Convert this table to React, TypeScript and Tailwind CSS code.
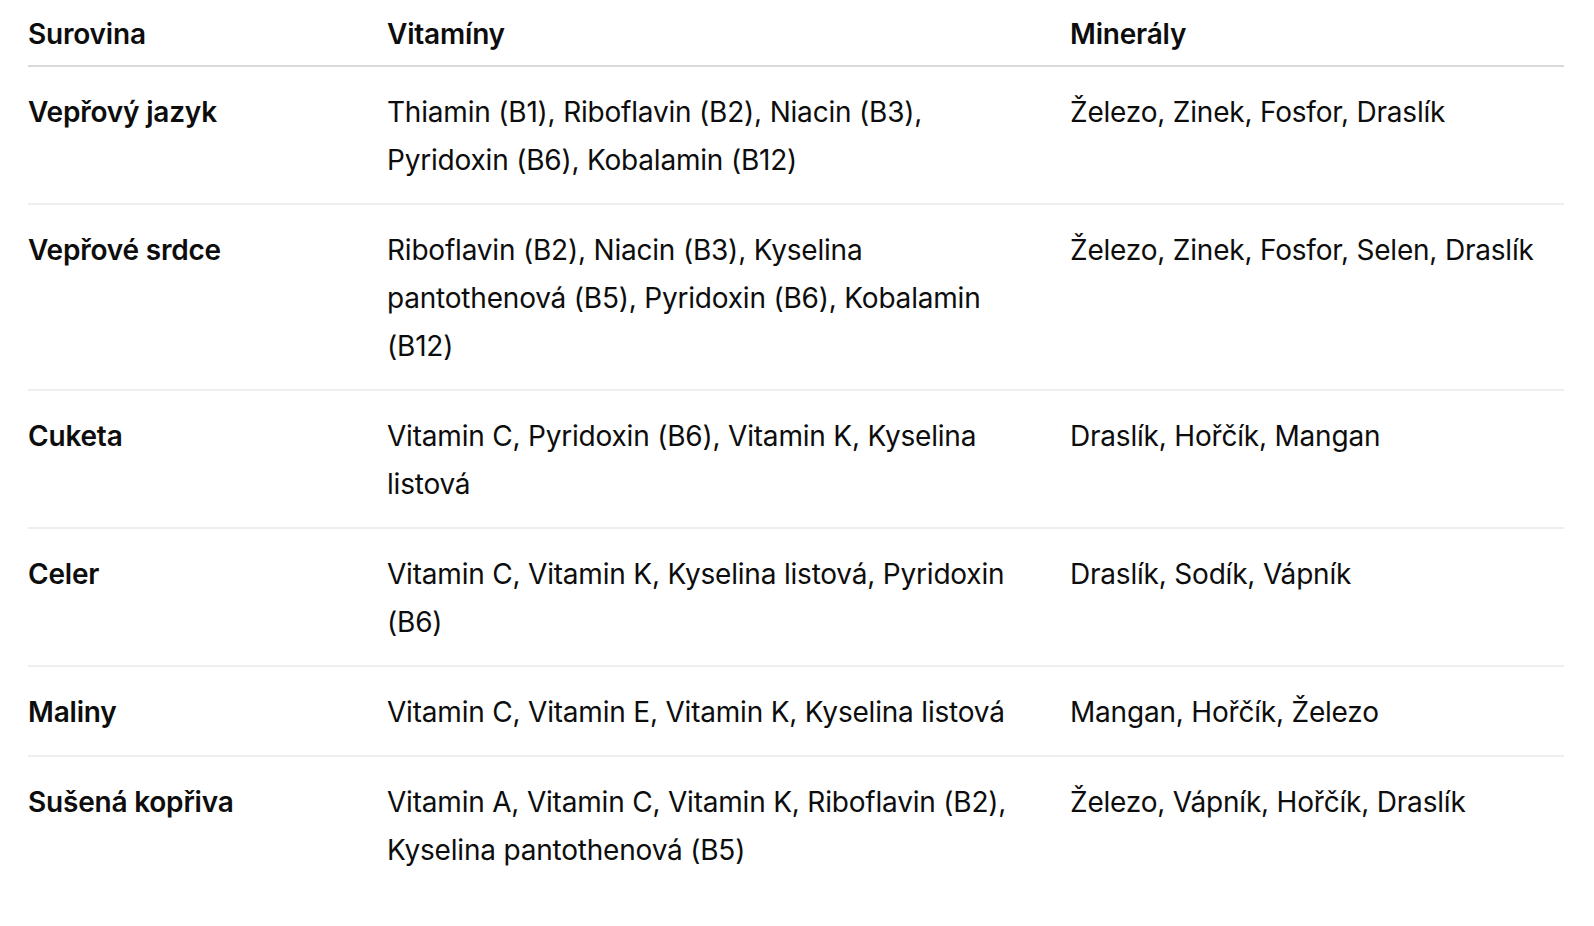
const rows: [string, string, string][] = [
  [
    "Vepřový jazyk",
    "Thiamin (B1), Riboflavin (B2), Niacin (B3), Pyridoxin (B6), Kobalamin (B12)",
    "Železo, Zinek, Fosfor, Draslík",
  ],
  [
    "Vepřové srdce",
    "Riboflavin (B2), Niacin (B3), Kyselina pantothenová (B5), Pyridoxin (B6), Kobalamin (B12)",
    "Železo, Zinek, Fosfor, Selen, Draslík",
  ],
  ["Cuketa", "Vitamin C, Pyridoxin (B6), Vitamin K, Kyselina listová", "Draslík, Hořčík, Mangan"],
  ["Celer", "Vitamin C, Vitamin K, Kyselina listová, Pyridoxin (B6)", "Draslík, Sodík, Vápník"],
  ["Maliny", "Vitamin C, Vitamin E, Vitamin K, Kyselina listová", "Mangan, Hořčík, Železo"],
  [
    "Sušená kopřiva",
    "Vitamin A, Vitamin C, Vitamin K, Riboflavin (B2), Kyselina pantothenová (B5)",
    "Železo, Vápník, Hořčík, Draslík",
  ],
];

export default function App() {
  return (
    <div className="min-h-screen bg-white pl-[28px] pr-[30px] pt-[10px] font-['Inter',sans-serif] text-[28px] leading-[48px] tracking-[-0.2px] text-[#0d0d0d]">
      {/* header */}
      <div className="grid grid-cols-[359px_683px_1fr] border-b-2 border-[#d9d9d9] pb-[7px] font-semibold">
        <div>Surovina</div>
        <div>Vitamíny</div>
        <div>Minerály</div>
      </div>

      {rows.map(([name, vit, min], i) => (
        <div
          key={name}
          className={
            "grid grid-cols-[359px_683px_1fr] pt-[21px] pb-[19px] " +
            (i < rows.length - 1 ? "border-b-2 border-[#efefef]" : "")
          }
        >
          <div className="pr-6 font-semibold">{name}</div>
          <div className="pr-[43px]">{vit}</div>
          <div>{min}</div>
        </div>
      ))}
    </div>
  );
}
